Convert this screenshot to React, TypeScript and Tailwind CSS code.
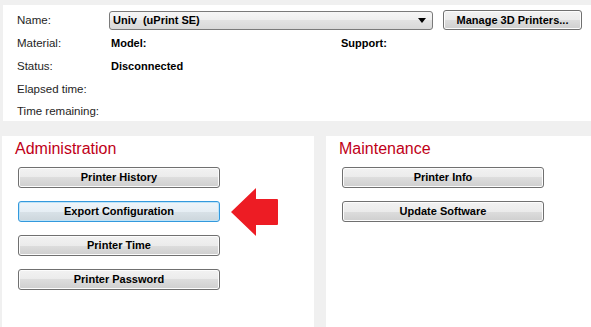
import type { ReactNode } from 'react'

// ─── Pieces ───────────────────────────────────────────────────────────────────

const FONT = "font-['Liberation_Sans',Arial,sans-serif]"

function WinButton({ children, focused = false, className = '' }: { children: ReactNode; focused?: boolean; className?: string }) {
  const look = focused
    ? 'border-[#3399dd] shadow-[inset_0_0_0_1px_#bfe3f7] bg-[linear-gradient(#eef5fa,#e6eef4_50%,#d9e2e8_50%,#ccd6dc)]'
    : 'border-[#707070] shadow-[inset_0_0_0_1px_#fcfcfc] bg-[linear-gradient(#f2f2f2,#ebebeb_50%,#dddddd_50%,#cfcfcf)]'
  return (
    <div className={`flex items-center justify-center rounded-[3px] border text-[11px] font-bold text-black ${look} ${className}`}>
      {children}
    </div>
  )
}

function InfoRow({ label, children }: { label: string; children?: ReactNode }) {
  return (
    <div className="flex h-[22.75px] items-center">
      <span className="w-[92px] shrink-0 text-[11.5px] leading-[14px] text-[#1e1e1e]">{label}</span>
      {children}
    </div>
  )
}

// ─── Component ────────────────────────────────────────────────────────────────

export default function App() {
  return (
    <div className={`relative flex h-[327px] w-[591px] flex-col overflow-hidden bg-[#f0f0f0] ${FONT}`}>
      {/* Printer details */}
      <div className="ml-[3px] mt-[5px] h-[116px] bg-white pl-[14px] pt-[4px]">
        <InfoRow label="Name:">
          <div className="flex h-[19px] w-[324px] items-center justify-between rounded-[3px] border border-[#7a7a7a] bg-[linear-gradient(#f6f6f6,#eeeeee_50%,#e2e2e2_50%,#d8d8d8)] pl-[3px] pr-[6px] text-[11px] font-bold text-black">
            <span className="whitespace-pre">Univ  (uPrint SE)</span>
            <svg width="8" height="5" viewBox="0 0 8 5">
              <path d="M0 0H8L4 5Z" fill="#000" />
            </svg>
          </div>
          <WinButton className="ml-[10px] h-[20px] w-[139px]">Manage 3D Printers...</WinButton>
        </InfoRow>
        <InfoRow label="Material:">
          <span className="ml-[2px] w-[230px] text-[11px] font-bold text-black">Model:</span>
          <span className="text-[11px] font-bold text-black">Support:</span>
        </InfoRow>
        <InfoRow label="Status:">
          <span className="ml-[2px] text-[11px] font-bold text-black">Disconnected</span>
        </InfoRow>
        <InfoRow label="Elapsed time:" />
        <InfoRow label="Time remaining:" />
      </div>

      {/* Administration / Maintenance */}
      <div className="mt-[15px] flex flex-1 gap-[12px] pl-[2px]">
        <section className="w-[312px] bg-white pl-[16px] pt-[1px]">
          <h2 className="ml-[-3px] text-[16px] leading-[24px] text-[#c00018]">Administration</h2>
          <div className="mt-[6px] flex flex-col gap-[13px]">
            <WinButton className="h-[21px] w-[202px]">Printer History</WinButton>
            <WinButton focused className="h-[21px] w-[202px]">Export Configuration</WinButton>
            <WinButton className="h-[21px] w-[202px]">Printer Time</WinButton>
            <WinButton className="h-[21px] w-[202px]">Printer Password</WinButton>
          </div>
        </section>
        <section className="flex-1 bg-white pl-[16px] pt-[1px]">
          <h2 className="ml-[-3px] text-[16px] leading-[24px] text-[#c00018]">Maintenance</h2>
          <div className="mt-[6px] flex flex-col gap-[13px]">
            <WinButton className="h-[21px] w-[202px]">Printer Info</WinButton>
            <WinButton className="h-[21px] w-[202px]">Update Software</WinButton>
          </div>
        </section>
      </div>

      {/* Callout arrow */}
      <svg className="absolute left-[230px] top-[187px]" width="50" height="51" viewBox="230 187 50 51">
        <path
          d="M231 212 L256 188 L256 199 L277 199 Q278 199 278 200 L278 224 Q278 225 277 225 L256 225 L256 236 Z"
          fill="#ed1c24"
        />
      </svg>
    </div>
  )
}
